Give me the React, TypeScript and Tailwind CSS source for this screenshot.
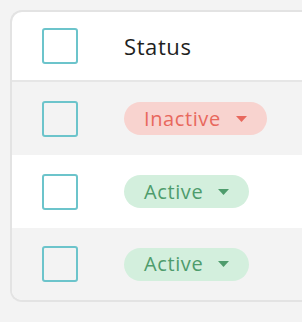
import React from 'react';

const rows = [
  { status: 'Inactive', bg: 'bg-[#f3f3f3]', h: 'h-[73px]' },
  { status: 'Active', bg: 'bg-white', h: 'h-[73px]' },
  { status: 'Active', bg: 'bg-[#f3f3f3]', h: 'h-[72px]' },
];

const Checkbox = () => (
  <div className="w-[36px] h-[36px] rounded-[3px] border-2 border-[#6cc4cb] shrink-0" />
);

const StatusPill = ({ status }: { status: string }) => {
  const inactive = status === 'Inactive';
  return (
    <button
      className={
        inactive
          ? 'flex items-center h-[33px] pl-[20px] pr-[20px] rounded-full bg-[#f8d3cf] text-[#e8685d]'
          : 'flex items-center h-[33px] pl-[20px] pr-[20px] rounded-full bg-[#d3efdd] text-[#4e9c6c]'
      }
    >
      <span className="text-[20px] tracking-[0.6px] leading-none">{status}</span>
      <svg width="11" height="6" viewBox="0 0 11 6" className="ml-[15px]">
        <path d="M0 0 L11 0 L5.5 6 Z" fill="currentColor" />
      </svg>
    </button>
  );
};

const App = () => {
  return (
    <div className="w-[302px] h-[322px] bg-[#f3f3f3] pt-[10px] pl-[10px] overflow-hidden font-['Open_Sans',sans-serif]">
      <div className="w-[320px] bg-white border-2 border-r-0 border-[#e3e3e3] rounded-l-[12px] overflow-hidden">
        <div className="flex items-center h-[70px] pl-[30px] border-b-2 border-[#e6e6e6]">
          <Checkbox />
          <span className="ml-[46px] text-[22px] text-[#1f1f1f] tracking-[0.6px]">Status</span>
        </div>
        {rows.map((row, i) => (
          <div key={i} className={`flex items-center pl-[30px] ${row.h} ${row.bg}`}>
            <Checkbox />
            <div className="ml-[46px]">
              <StatusPill status={row.status} />
            </div>
          </div>
        ))}
      </div>
    </div>
  );
};

export default App;
